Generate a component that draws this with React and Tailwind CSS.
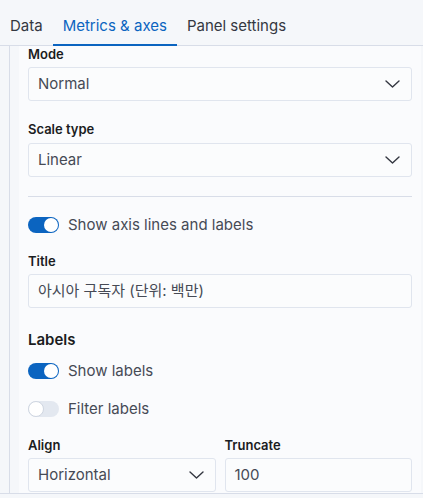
import React from 'react';

const Chevron = () => (
  <svg width="15" height="8" viewBox="0 0 15 8" fill="none" className="shrink-0">
    <path d="M1 1L7.5 7L14 1" stroke="#343741" strokeWidth="1.4" strokeLinecap="round" strokeLinejoin="round" />
  </svg>
);

const Label = ({ children, className = '' }) => (
  <div className={`text-[13px] leading-[16px] font-semibold text-[#1a1c21] ${className}`}>{children}</div>
);

const Select = ({ value, className = '' }) => (
  <div className={`h-[34px] flex items-center justify-between pl-[9px] pr-[11px] bg-[#fbfcfd] border border-[#e0e5ee] rounded-[3px] text-[15px] text-[#464a55] ${className}`}>
    <span>{value}</span>
    <Chevron />
  </div>
);

const Input = ({ value, className = '' }) => (
  <div className={`h-[34px] flex items-center pl-[9px] bg-[#fbfcfd] border border-[#e0e5ee] rounded-[3px] text-[15px] text-[#464a55] ${className}`}>
    {value}
  </div>
);

const Switch = ({ on, label, className = '' }) => (
  <div className={`h-[20px] flex items-center gap-[9px] ${className}`}>
    {on ? (
      <div className="relative w-[31px] h-[16px] rounded-full bg-[#0b64c0]">
        <div className="absolute top-[1px] right-[1px] w-[14px] h-[14px] rounded-full bg-white" />
      </div>
    ) : (
      <div className="relative w-[31px] h-[16px] rounded-full bg-[#e3e8f0]">
        <div className="absolute top-0 left-0 w-[16px] h-[16px] rounded-full bg-white border border-[#cfd6e1]" />
      </div>
    )}
    <span className="text-[15px] text-[#464a55]">{label}</span>
  </div>
);

export default function App() {
  const tabs = [
    { name: 'Data', active: false },
    { name: 'Metrics & axes', active: true },
    { name: 'Panel settings', active: false },
  ];

  return (
    <div className="w-[423px] h-[498px] overflow-hidden bg-[#f5f7fa]" style={{ fontFamily: 'Inter, "Noto Sans CJK KR", sans-serif' }}>
      {/* Tabs */}
      <div className="h-[46px] flex border-b border-[#d8dde8]">
        {tabs.map((tab) => (
          <div
            key={tab.name}
            className={`relative h-full flex items-center pt-[7px] px-[10px] text-[15px] ${tab.active ? 'text-[#0b64c0]' : 'text-[#343741]'}`}
          >
            {tab.name}
            {tab.active && <div className="absolute left-0 right-0 bottom-[-1px] h-[2px] bg-[#0b64c0]" />}
          </div>
        ))}
      </div>

      {/* Body */}
      <div className="flex h-[448px] border-b border-[#d8dde8]">
        <div className="w-[9px] shrink-0" />
        <div className="w-px shrink-0 bg-[#d8dde8]" />
        <div className="w-[9px] shrink-0" />
        <div className="w-[402px] shrink-0 bg-[#fafbfd] pl-[9px] pr-[9px] overflow-hidden">
          <Label>Mode</Label>
          <Select value="Normal" className="mt-[5px]" />

          <Label className="mt-[20px]">Scale type</Label>
          <Select value="Linear" className="mt-[6px]" />

          <div className="mt-[19px] h-px bg-[#d8dde8]" />

          <Switch on label="Show axis lines and labels" className="mt-[18px]" />

          <Label className="mt-[18px]">Title</Label>
          <Input value="아시아 구독자 (단위: 백만)" className="mt-[5px]" />

          <div className="mt-[22px] text-[15px] leading-[20px] font-semibold text-[#1a1c21]">Labels</div>
          <Switch on label="Show labels" className="mt-[11px]" />
          <Switch on={false} label="Filter labels" className="mt-[18px]" />

          <div className="mt-[18px] grid grid-cols-2 gap-[9px]">
            <div>
              <Label>Align</Label>
              <Select value="Horizontal" className="mt-[5px]" />
            </div>
            <div>
              <Label>Truncate</Label>
              <Input value="100" className="mt-[5px]" />
            </div>
          </div>
        </div>
      </div>
    </div>
  );
}
